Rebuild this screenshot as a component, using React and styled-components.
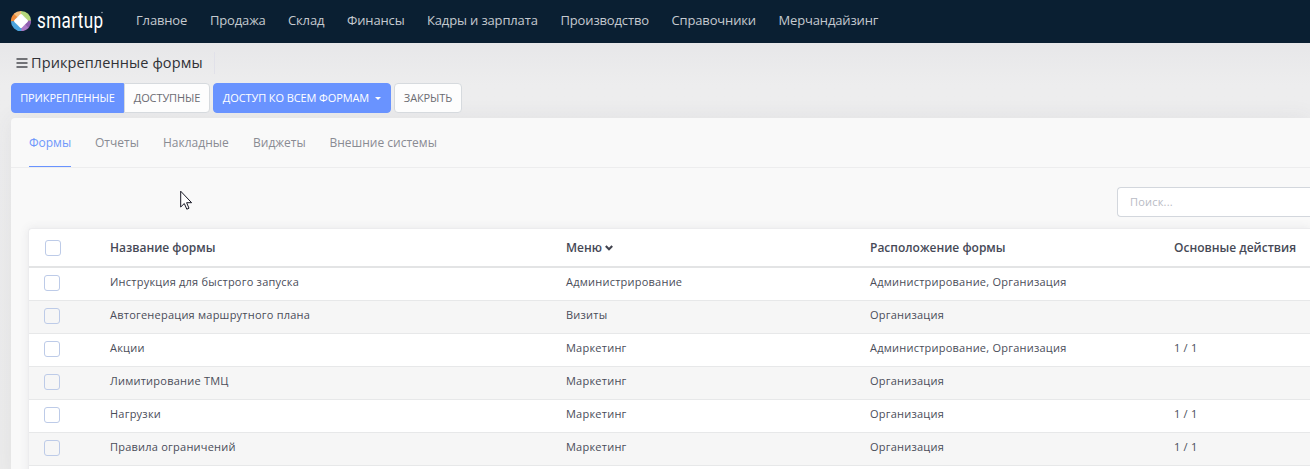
import React from 'react';
import styled, { createGlobalStyle } from 'styled-components';

const GlobalStyle = createGlobalStyle`
  * { box-sizing: border-box; }
  html, body { margin: 0; }
  body {
    width: 1310px;
    height: 469px;
    overflow: hidden;
    font-family: "Open Sans", "Noto Sans", sans-serif;
    background: #e9e9ea;
  }
  button, input { font-family: inherit; margin: 0; }
`;

const Page = styled.div`
  position: relative;
  width: 1310px;
  height: 469px;
  overflow: hidden;
  background: linear-gradient(#e7e7e9 43px, #ededee 85px, #ececec 469px);
`;

const Header = styled.header`
  display: flex;
  height: 43px;
  background: #0a1f32;
`;

const Brand = styled.div`
  display: flex;
  width: 136px;
  height: 43px;
  flex: none;
  svg { display: block; overflow: visible; }
`;

const Wordmark = styled.span`
  width: 90px;
  height: 43px;
  padding-left: 4px;
  color: #fff;
  font-family: Roboto, "Liberation Sans", sans-serif;
  font-size: 22px;
  line-height: 41px;
  letter-spacing: 0.5px;
  transform: scaleX(0.775);
  transform-origin: 4px 0;
`;

const Nav = styled.nav`
  display: flex;
`;

const NavItem = styled.a`
  width: ${(p) => p.$w}px;
  flex: none;
  white-space: nowrap;
  font-size: 13px;
  line-height: 41px;
  letter-spacing: -0.15px;
  color: #c5cad0;
`;

const TitleBar = styled.div`
  display: flex;
  align-items: center;
  gap: 3px;
  width: 215px;
  height: 22px;
  margin-top: 9px;
  padding-left: 16px;
  border-right: 1px solid #e1e1e9;
  svg { flex: none; }
`;

const Title = styled.h1`
  margin: 0;
  font-size: 14.5px;
  font-weight: 500;
  line-height: 21px;
  padding-bottom: 1px;
  letter-spacing: 0.1px;
  white-space: nowrap;
  color: #303136;
`;

const Toolbar = styled.div`
  display: flex;
  gap: 3px;
  margin-top: 9px;
  padding-left: 11px;
`;

const Group = styled.div`
  display: flex;
`;

const Button = styled.button`
  display: flex;
  align-items: center;
  justify-content: center;
  width: ${(p) => p.$w}px;
  height: 30px;
  padding: 0;
  border: 1px solid ${(p) => (p.$primary ? '#6993ff' : '#d6dade')};
  border-radius: ${(p) => p.$radius || '4px'};
  background: ${(p) => (p.$primary ? '#6993ff' : '#fdfdfd')};
  color: ${(p) => (p.$primary ? '#fff' : '#6b6c72')};
  font-size: 11px;
  line-height: 28px;
  letter-spacing: -0.1px;
  white-space: nowrap;
`;

const Caret = styled.span`
  margin-left: 6px;
  border: 3px solid transparent;
  border-top-color: #fff;
  border-bottom: 0;
`;

const Card = styled.section`
  height: 360px;
  margin: 5px 0 0 11px;
  border-radius: 4px 0 0 0;
  background: #f9f9f9;
  box-shadow: 0 0 22px rgba(70, 70, 80, 0.07);
`;

const Tabs = styled.div`
  display: flex;
  gap: 24px;
  height: 50px;
  padding-left: 18px;
  border-bottom: 1px solid #ededee;
`;

const Tab = styled.a`
  width: ${(p) => p.$w}px;
  height: 49px;
  border-bottom: 1px solid ${(p) => (p.$active ? '#6993ff' : 'transparent')};
  color: ${(p) => (p.$active ? '#6f98fb' : '#898b93')};
  font-size: 12px;
  line-height: 49px;
  white-space: nowrap;
`;

const SearchRow = styled.div`
  display: flex;
  justify-content: flex-end;
  padding-top: 19px;
`;

const Search = styled.input`
  width: 193px;
  height: 30px;
  padding: 0 12px 2px;
  border: 1px solid #d3d7dd;
  border-right: 0;
  border-radius: 4px 0 0 4px;
  background: #fff;
  font-size: 11px;
  letter-spacing: 0.2px;
  outline: 0;
  &::placeholder { color: #b9bbc5; opacity: 1; }
`;

const Table = styled.div`
  margin: 11px 0 0 17px;
  border: 1px solid #ececee;
  border-right: 0;
  border-radius: 4px 0 0 0;
  background: #fff;
  box-shadow: 0 0 10px rgba(80, 80, 95, 0.1);
`;

const columns = '81px 456px 304px 304px 136px';

const HeadRow = styled.div`
  display: grid;
  grid-template-columns: ${columns};
  height: 39px;
  border-bottom: 2px solid #e3e4e5;
  color: #464956;
  font-size: 12px;
  font-weight: 600;
  line-height: 37px;
`;

const Row = styled.div`
  display: grid;
  grid-template-columns: ${columns};
  height: 33px;
  border-bottom: 1px solid #e7e8e9;
  background: ${(p) => (p.$striped ? '#f6f6f6' : '#fff')};
  color: #4a4d59;
  font-size: 11px;
  line-height: 27px;
  letter-spacing: 0.23px;
`;

const Cell = styled.div`
  white-space: nowrap;
`;

const Checkbox = styled.span`
  display: block;
  width: 16px;
  height: 16px;
  margin: ${(p) => (p.$head ? '11px 0 0 16px' : '7px 0 0 15px')};
  border: 1px solid #bdcbe8;
  border-radius: 3px;
`;

const SortIcon = styled.svg`
  margin-left: 3px;
  vertical-align: 0;
`;

const Pointer = styled.svg`
  position: absolute;
  left: 180px;
  top: 190px;
`;

function Logo() {
  return (
    <svg width="33" height="43" viewBox="0 0 33 43">
      <g fill="none" strokeWidth="5">
        <path d="M13.4 21.5A7.6 7.6 0 0 1 16 15.3" stroke="#ef8b3b" />
        <path d="M15.5 15.6A7.6 7.6 0 0 1 21.3 13.4" stroke="#f6bd7c" />
        <path d="M21 13.4A7.6 7.6 0 0 1 28.6 21" stroke="#b5d77b" />
        <path d="M28.6 20.7A7.6 7.6 0 0 1 26.4 26.4" stroke="#8d5cae" />
        <path d="M26.8 26A7.6 7.6 0 0 1 21 28.6" stroke="#aa78c4" />
        <path d="M21.3 28.6A7.6 7.6 0 0 1 13.4 21.2" stroke="#4ba4de" />
      </g>
      <path d="M21 15.5 26.5 21 21 26.5 15.5 21Z" fill="#fff" stroke="#fff" strokeWidth="3" strokeLinejoin="round" />
      <circle cx="102" cy="12.5" r="0.8" fill="#9ba5af" />
    </svg>
  );
}

const navItems = [
  ['Главное', 74], ['Продажа', 78], ['Склад', 59], ['Финансы', 80],
  ['Кадры и зарплата', 133.5], ['Производство', 111], ['Справочники', 107], ['Мерчандайзинг', 110],
];

const tabs = [['Формы', 42], ['Отчеты', 44], ['Накладные', 66], ['Виджеты', 52.5], ['Внешние системы', 110]];

const rows = [
  ['Инструкция для быстрого запуска', 'Администрирование', 'Администрирование, Организация', ''],
  ['Автогенерация маршрутного плана', 'Визиты', 'Организация', ''],
  ['Акции', 'Маркетинг', 'Администрирование, Организация', '1 / 1'],
  ['Лимитирование ТМЦ', 'Маркетинг', 'Организация', ''],
  ['Нагрузки', 'Маркетинг', 'Организация', '1 / 1'],
  ['Правила ограничений', 'Маркетинг', 'Организация', '1 / 1'],
  ['', '', '', ''],
];

export default function App() {
  return (
    <Page>
      <GlobalStyle />
      <Header>
        <Brand><Logo /><Wordmark>smartup</Wordmark></Brand>
        <Nav>{navItems.map(([label, w]) => <NavItem key={label} $w={w}>{label}</NavItem>)}</Nav>
      </Header>
      <TitleBar>
        <svg width="12" height="10" viewBox="0 0 12 10" stroke="#494b50" strokeWidth="1.3">
          <path d="M.5 1H11.5M.5 5H11.5M.5 9H11.5" />
        </svg>
        <Title>Прикрепленные формы</Title>
      </TitleBar>
      <Toolbar>
        <Group>
          <Button $primary $w={113} $radius="4px 0 0 4px">ПРИКРЕПЛЕННЫЕ</Button>
          <Button $w={86} $radius="0 4px 4px 0">ДОСТУПНЫЕ</Button>
        </Group>
        <Button $primary $w={178}>ДОСТУП КО ВСЕМ ФОРМАМ<Caret /></Button>
        <Button $w={68}>ЗАКРЫТЬ</Button>
      </Toolbar>
      <Card>
        <Tabs>{tabs.map(([label, w], i) => <Tab key={label} $w={w} $active={i === 0}>{label}</Tab>)}</Tabs>
        <SearchRow><Search placeholder="Поиск..." /></SearchRow>
        <Table>
          <HeadRow>
            <Cell><Checkbox $head /></Cell>
            <Cell>Название формы</Cell>
            <Cell>
              Меню
              <SortIcon width="8" height="8" viewBox="0 0 8 8" fill="none" stroke="#40424d" strokeWidth="2.1">
                <path d="M.8 2 4 5.2 7.2 2" />
              </SortIcon>
            </Cell>
            <Cell>Расположение формы</Cell>
            <Cell>Основные действия</Cell>
          </HeadRow>
          {rows.map((r, i) => (
            <Row key={i} $striped={i % 2 === 1}>
              <Cell><Checkbox /></Cell>
              {r.map((text, j) => <Cell key={j}>{text}</Cell>)}
            </Row>
          ))}
        </Table>
      </Card>
      <Pointer width="13" height="21" viewBox="0 0 13 21">
        <path d="M.7 1.2V17L4.3 13.5 6.8 19.2 9 18.2 6.6 12.7H11.6Z" fill="#fff" stroke="#151623" strokeWidth="1" />
      </Pointer>
    </Page>
  );
}
